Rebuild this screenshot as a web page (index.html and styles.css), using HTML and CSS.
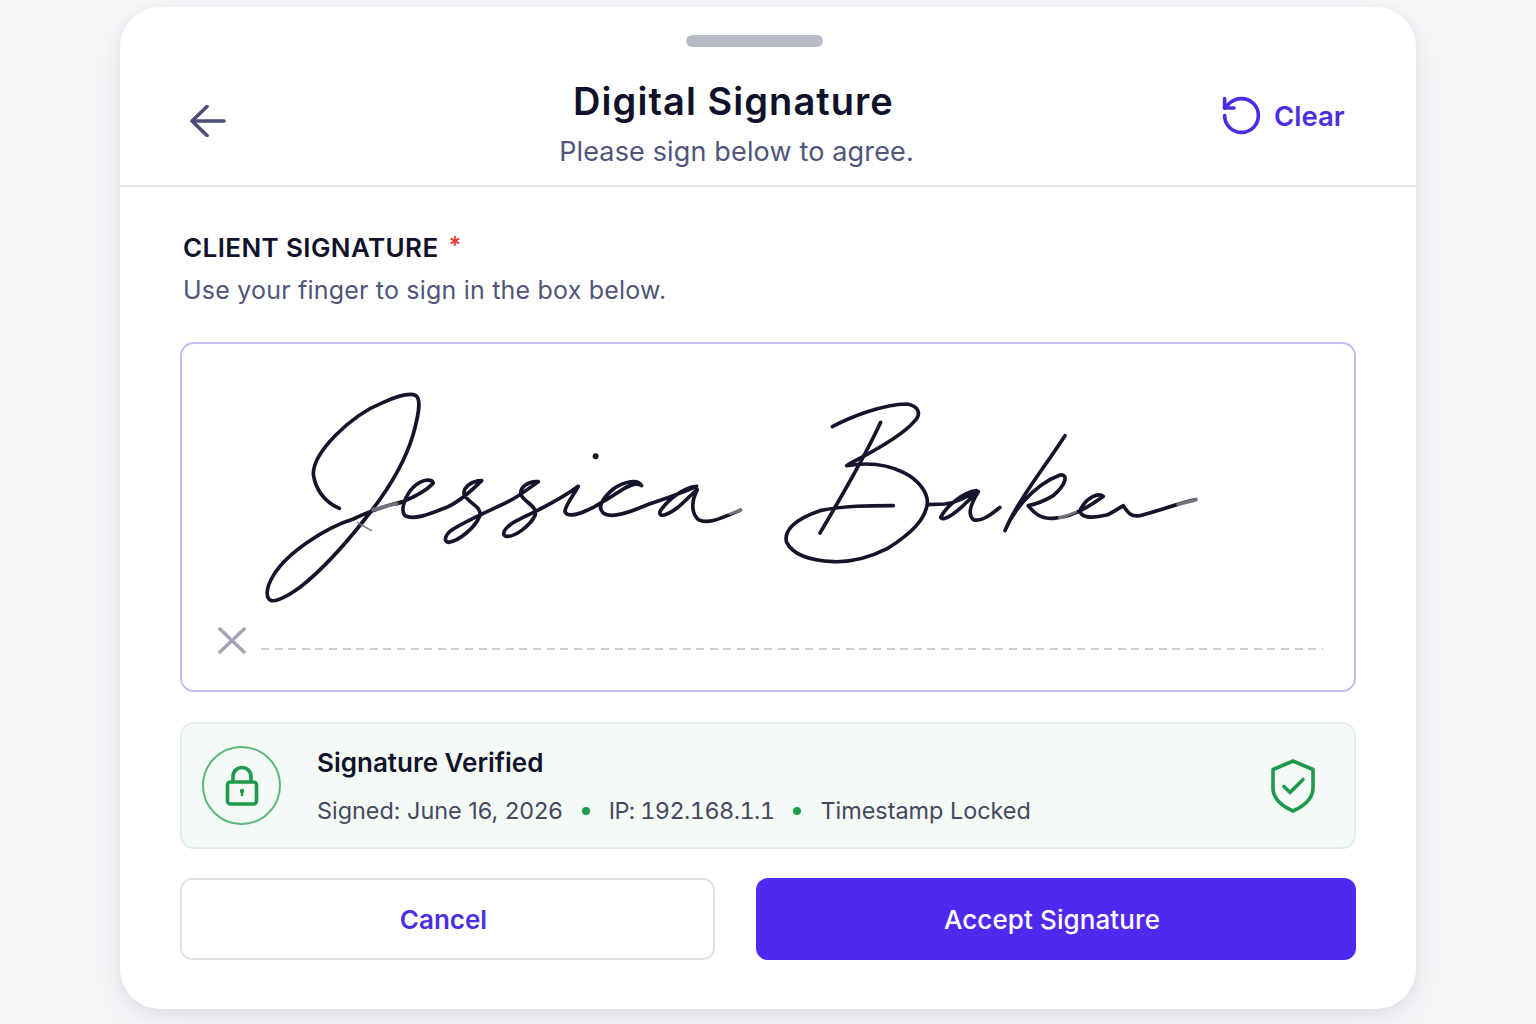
FILE: index.html
```html
<!DOCTYPE html>
<html lang="en">
<head>
<meta charset="utf-8">
<title>Digital Signature</title>
<link rel="stylesheet" href="styles.css">
</head>
<body>
<main class="card">
  <div class="handle"></div>
  <header class="header">
    <button class="back" aria-label="Back">
      <svg width="36" height="32" viewBox="0 0 36 32" fill="none" stroke="currentColor" stroke-width="3.6" stroke-linecap="round" stroke-linejoin="round"><path d="M34 16H2M17 1.500 2 16l15 14.500"/></svg>
    </button>
    <div class="heading">
      <h1 class="title">Digital Signature</h1>
      <p class="subtitle">Please sign below to agree.</p>
    </div>
    <button class="clear">
      <svg width="45" height="45" viewBox="0 0 24 24" fill="none" stroke="currentColor" stroke-width="1.95" stroke-linecap="round" stroke-linejoin="round"><path d="M3 12a9 9 0 1 0 9-9 9.750 9.750 0 0 0-6.740 2.740L3 8"/><path d="M3 3v5h5"/></svg>
      <span>Clear</span>
    </button>
  </header>
  <section class="content">
    <h2 class="label">CLIENT SIGNATURE <span class="req">*</span></h2>
    <p class="hint">Use your finger to sign in the box below.</p>
    <div class="sigbox">
      <svg class="sig" viewBox="183 345 1170 275" role="img" aria-label="Signature of Jessica Baker" fill="none" stroke="#14152b" stroke-linecap="round" stroke-linejoin="round">
        <g transform="translate(250 380) scale(.3333)" stroke-width="11">
          <path d="M268 388C225 370 195 330 190 285C190 220 300 110 400 70C440 52 480 40 498 50C515 62 505 110 490 165C465 250 410 340 345 420C290 490 220 570 150 625C115 650 85 668 65 665C45 660 48 625 70 590C110 520 230 445 310 420C360 395 410 380 460 368"/>
          <path d="M440 375C480 360 530 335 550 312C545 298 515 300 490 325C465 350 450 395 465 410C490 425 540 405 590 385C625 370 660 340 695 305C665 305 640 325 642 345C650 370 695 380 690 410C675 445 630 485 595 490C580 488 585 465 610 450C660 420 720 395 780 365C810 350 840 325 865 308C835 305 810 325 812 345C820 370 865 380 855 410C840 440 795 475 768 472C750 465 770 440 800 425C860 395 920 370 985 322C970 350 945 380 945 398C955 420 1000 400 1030 385C1060 368 1090 350 1120 330C1140 318 1160 308 1175 320C1165 300 1125 305 1090 330C1060 355 1040 385 1060 402C1085 420 1140 400 1190 378C1240 360 1290 345 1340 322C1300 325 1250 365 1230 398C1225 420 1260 405 1290 380C1310 362 1325 345 1342 332C1325 365 1322 400 1345 422C1375 438 1420 415 1472 393"/>
          <path class="fade" d="M370 392 440 375M1440 402 1475 392" stroke-width="12"/>
          <path stroke="#75768a" stroke-width="4" d="M322 430 364 455"/>
          <circle cx="1037" cy="232" r="9" fill="#14152b" stroke="none"/>
        </g>
        <g transform="translate(770 390) scale(.3333)" stroke-width="11">
          <path d="M187 113C240 85 340 45 410 45C445 50 458 75 430 100C400 135 340 170 275 205C255 215 240 222 230 230C290 220 350 225 400 250C445 272 475 310 472 345C465 390 430 430 350 480C290 510 240 520 190 518C130 515 70 500 50 460C40 425 75 390 150 365C220 350 300 350 370 350"/>
          <path d="M332 100C300 170 240 280 150 432"/>
          <path d="M472 347 525 345C560 340 590 325 620 305C580 310 530 350 512 385C520 400 560 370 590 340C605 325 615 315 625 308C605 340 590 375 610 392C635 400 665 375 690 355"/>
          <path d="M885 140C820 240 740 340 705 425C725 375 785 290 870 258C895 255 890 285 850 320C825 335 800 345 775 350C790 370 810 390 850 388C900 385 950 360 1000 322C985 310 950 325 932 360C925 385 960 390 1010 378C1030 370 1050 355 1060 350C1070 365 1080 385 1110 380C1150 370 1220 345 1278 332"/>
          <path class="fade" d="M870 386 915 368M1225 347 1280 332" stroke-width="12"/>
        </g>
      </svg>
      <div class="signline">
        <svg class="xmark" width="28" height="27" viewBox="0 0 28 27" fill="none" stroke="currentColor" stroke-width="3.4" stroke-linecap="square"><path d="M2 2 26 25M26 2 2 25"/></svg>
        <div class="dash"></div>
      </div>
    </div>
    <div class="status">
      <div class="lockring">
        <svg width="34" height="42" viewBox="0 0 34 42" fill="none" stroke="currentColor" stroke-width="3.600" stroke-linejoin="round"><rect x="2.500" y="17" width="29" height="22" rx="3"/><path d="M8 17V11.500a9 9 0 0 1 18 0V17"/><circle cx="17" cy="26" r="2.200" fill="currentColor" stroke="none"/><path d="M17 26v5" stroke-width="2.400"/></svg>
      </div>
      <div class="statustext">
        <div class="statustitle">Signature Verified</div>
        <div class="statusmeta"><span>Signed: June 16, 2026</span><i class="dot"></i><span class="ip">IP: 192.168.1.1</span><i class="dot"></i><span>Timestamp Locked</span></div>
      </div>
      <svg class="shield" width="44" height="54" viewBox="0 0 44 54" fill="none" stroke="currentColor" stroke-width="3.600" stroke-linecap="round" stroke-linejoin="round"><path d="M22 2 42 10.500V29C42 39 33 47 22 52 11 47 2 39 2 29V10.500Z"/><path d="M13 27.500 19 33.500 32 20.500"/></svg>
    </div>
    <div class="actions">
      <button class="btn cancel">Cancel</button>
      <button class="btn accept">Accept Signature</button>
    </div>
  </section>
</main>
</body>
</html>
```
FILE: styles.css
```css
* { box-sizing: border-box; }
html, body { margin: 0; height: 1024px; overflow: hidden; }
body {
  background: #f7f8fa;
  padding-top: 7px;
  font-family: Inter, "Liberation Sans", sans-serif;
  color: #12132a;
}
button { font: inherit; background: none; border: 0; padding: 0; }
h1, h2, p { margin: 0; }

.card {
  width: 1296px;
  height: 1002px;
  margin: 0 auto;
  background: #fff;
  border-radius: 40px;
  box-shadow: 0 4px 14px rgba(30, 32, 70, .07), 0 14px 44px rgba(30, 32, 70, .07);
  display: flex;
  flex-direction: column;
}
.handle {
  width: 137px;
  height: 12px;
  margin: 28px 0 0 566px;
  border-radius: 6px;
  background: #b9bbc6;
}
.header {
  height: 140px;
  border-bottom: 2px solid #e3e5ea;
  display: flex;
  align-items: flex-start;
}
.back {
  width: 128px;
  padding: 58px 0 0 70px;
  color: #4a4e78;
  display: flex;
  flex: none;
}
.heading { flex: 1; text-align: center; padding-top: 31px; }
.title { font-size: 38px; line-height: 46px; font-weight: 600; letter-spacing: 1.05px; color: #10112a; }
.subtitle { font-size: 27px; line-height: 36px; margin-top: 10px; padding-left: 6px; letter-spacing: .15px; color: #50557a; }
.clear {
  display: flex;
  align-items: center;
  gap: 10px;
  width: 197px;
  flex: none;
  padding-top: 46px;
  font-size: 27.5px;
  font-weight: 600;
  color: #4a2fe2;
}
.content { padding: 0 60px; display: flex; flex-direction: column; }
.label { font-size: 26px; line-height: 32px; font-weight: 600; letter-spacing: .4px; margin: 45px 0 0 3px; color: #11122a; }
.req { color: #ef3b3b; margin-left: 3px; position: relative; top: -3px; font-size: 24px; }
.hint { font-size: 25px; line-height: 34px; letter-spacing: .2px; margin: 8px 0 0 3px; color: #50557a; }
.sigbox {
  width: 1176px;
  height: 350px;
  margin-top: 35px;
  border: 2px solid #c5bdf0;
  border-radius: 14px;
  background: #fff;
  display: flex;
  flex-direction: column;
}
.sig { display: block; width: 100%; height: 275px; flex: none; }
.fade { stroke: #fff; opacity: .4; }
.signline { display: flex; margin: 8px 31px 0 36px; gap: 15px; }
.xmark { color: #a3a4b4; flex: none; }
.dash {
  flex: 1;
  height: 2px;
  margin-top: 21px;
  background: repeating-linear-gradient(90deg, #cbccd6 0 8px, transparent 8px 13.6px);
}
.status {
  width: 1176px;
  height: 127px;
  margin-top: 30px;
  border: 2px solid #e0f0e7;
  border-radius: 14px;
  background: #f4fbf7;
  display: flex;
  align-items: center;
  padding: 0 39px 0 20px;
}
.lockring {
  width: 79px;
  height: 79px;
  border-radius: 50%;
  border: 2px solid #5cb87d;
  color: #1f9a4c;
  display: flex;
  align-items: center;
  justify-content: center;
  flex: none;
}
.statustext { flex: 1; padding-left: 36px; }
.statustitle { font-size: 26px; line-height: 34px; font-weight: 600; color: #12132a; margin-top: 1px; }
.statusmeta { font-size: 23.4px; line-height: 32px; margin-top: 15px; color: #45485f; display: flex; align-items: center; }
.ip { font-feature-settings: "tnum"; letter-spacing: -.55px; }
.dot { width: 8px; height: 8px; border-radius: 50%; background: #1f9d4d; margin: 0 19px; flex: none; }
.shield { color: #1f9a4c; flex: none; }
.actions { display: flex; gap: 41px; margin-top: 29px; }
.btn { height: 82px; border-radius: 12px; font-size: 26px; font-weight: 600; padding-right: 8px; }
.cancel { width: 535px; background: #fff; border: 2px solid #e2e3e8; color: #4a2fe2; }
.accept { width: 600px; background: #5029f0; color: #fff; font-weight: 500; letter-spacing: .1px; }
```
